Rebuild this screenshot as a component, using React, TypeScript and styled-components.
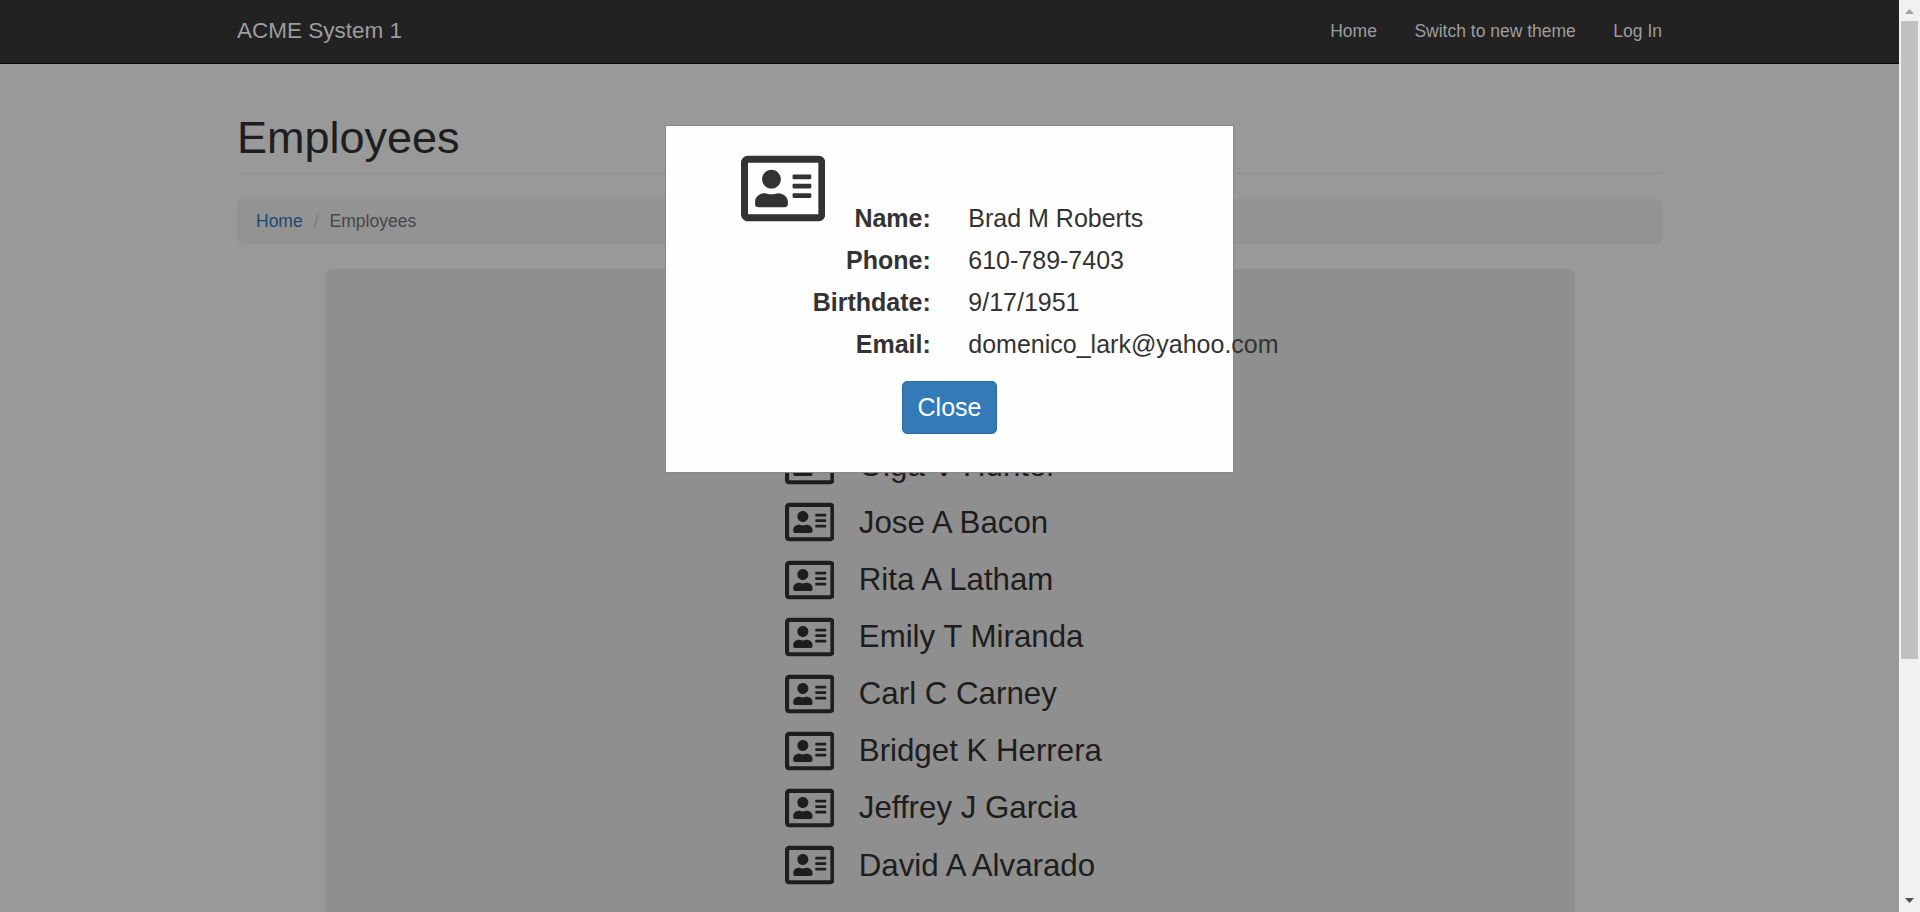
import React from "react";
import styled, { createGlobalStyle } from "styled-components";
import { FaRegAddressCard } from "react-icons/fa";

const GlobalStyle = createGlobalStyle`
  *, *::before, *::after { box-sizing: border-box; }
  html, body { margin: 0; padding: 0; }
  body {
    background: #fff;
    color: #333;
    font-family: Arial, "Liberation Sans", sans-serif;
    font-size: 17.5px;
    line-height: 25px;
    overflow: hidden;
  }
`;

const Window = styled.div`
  display: flex;
  height: 912px;
`;

const Viewport = styled.div`
  position: relative;
  flex: 1;
  display: flex;
  flex-direction: column;
  overflow: hidden;
`;

const Navbar = styled.nav`
  position: relative;
  z-index: 3;
  flex: none;
  height: 64px;
  background: #222;
  border-bottom: 1px solid #080808;
`;

const Container = styled.div`
  width: 1425px;
  margin: 0 auto;
`;

const NavRow = styled(Container)`
  display: flex;
  align-items: center;
  justify-content: space-between;
  height: 62px;
`;

const Brand = styled.a`
  padding-bottom: 2px;
  color: #9d9d9d;
  font-size: 22.5px;
`;

const NavLinks = styled.div`
  display: flex;
  gap: 37.5px;
`;

const NavLink = styled.a`
  color: #9d9d9d;
`;

const Page = styled(Container)`
  display: flex;
  flex-direction: column;
  flex: 1;
  min-height: 0;
`;

const PageHeader = styled.header`
  margin: 49px 0 25px;
  padding-bottom: 11px;
  border-bottom: 1px solid #eee;
`;

const Title = styled.h1`
  margin: 0;
  font-size: 45px;
  font-weight: 400;
  line-height: 49px;
`;

const Breadcrumb = styled.div`
  display: flex;
  flex: none;
  height: 45px;
  margin-bottom: 25px;
  padding: 10px 19px;
  background: #f5f5f5;
  border-radius: 5px;
`;

const CrumbLink = styled.a`
  color: #337ab7;
`;

const CrumbSeparator = styled.span`
  padding: 0 11px;
  color: #ccc;
`;

const Crumb = styled.span`
  color: #777;
`;

const Panel = styled.section`
  align-self: center;
  flex: 1;
  width: 1250px;
  padding: 167.8px 0 0 460px;
  background: #eee;
  border-radius: 7px 7px 0 0;
`;

const EmployeeRow = styled.div`
  display: flex;
  align-items: center;
  gap: 24.8px;
  height: 57.1px;
  font-size: 31.25px;
`;

const CardIcon = styled(FaRegAddressCard)<{ $size: number }>`
  flex: none;
  width: ${({ $size }) => $size * 1.125}px;
  height: ${({ $size }) => $size}px;
`;

const Backdrop = styled.div`
  position: absolute;
  inset: 0;
  z-index: 2;
  display: flex;
  justify-content: center;
  align-items: flex-start;
  padding-top: 125px;
  background: rgba(0, 0, 0, 0.4);
`;

const Dialog = styled.div`
  display: flex;
  flex-direction: column;
  align-items: center;
  width: 569px;
  height: 348px;
  padding-top: 25px;
  background: #fefefe;
  border: 1px solid #888;
  font-size: 25px;
`;

const DetailRow = styled.div<{ $tall?: boolean }>`
  display: flex;
  align-items: flex-end;
  align-self: stretch;
  gap: 37.5px;
  height: ${({ $tall }) => ($tall ? 88 : 42)}px;
  line-height: 42px;
  white-space: nowrap;
`;

const LabelCell = styled.div`
  display: flex;
  flex: none;
  align-items: flex-start;
  justify-content: flex-end;
  gap: 29px;
  width: 264.8px;
`;

const Label = styled.span<{ $dropped?: boolean }>`
  font-weight: 700;
  padding-top: ${({ $dropped }) => ($dropped ? 46 : 0)}px;
`;

const CloseButton = styled.button`
  margin-top: 16px;
  width: 95px;
  height: 53px;
  padding: 0;
  color: #fff;
  background: #337ab7;
  border: 1px solid #2e6da4;
  border-radius: 5px;
  font: inherit;
`;

const ScrollTrack = styled.div`
  display: flex;
  flex-direction: column;
  align-items: center;
  justify-content: space-between;
  width: 21px;
  padding: 9px 0;
  background: #f1f1f1;
`;

const ScrollThumb = styled.div`
  width: 17px;
  height: 638px;
  margin: 7px 0 auto;
  background: #c1c1c1;
`;

const Arrow = styled.svg`
  display: block;
  flex: none;
  width: 9px;
  height: 5px;
`;

const employees = [
  "Olga V Hunter",
  "Jose A Bacon",
  "Rita A Latham",
  "Emily T Miranda",
  "Carl C Carney",
  "Bridget K Herrera",
  "Jeffrey J Garcia",
  "David A Alvarado",
];

const details = [
  { label: "Name:", value: "Brad M Roberts" },
  { label: "Phone:", value: "610-789-7403" },
  { label: "Birthdate:", value: "9/17/1951" },
  { label: "Email:", value: "domenico_lark@yahoo.com" },
];

export default function App() {
  return (
    <Window>
      <GlobalStyle />
      <Viewport>
        <Navbar>
          <NavRow>
            <Brand>ACME System 1</Brand>
            <NavLinks>
              <NavLink>Home</NavLink>
              <NavLink>Switch to new theme</NavLink>
              <NavLink>Log In</NavLink>
            </NavLinks>
          </NavRow>
        </Navbar>
        <Page as="main">
          <PageHeader>
            <Title>Employees</Title>
          </PageHeader>
          <Breadcrumb>
            <CrumbLink>Home</CrumbLink>
            <CrumbSeparator>/</CrumbSeparator>
            <Crumb>Employees</Crumb>
          </Breadcrumb>
          <Panel>
            {employees.map((name) => (
              <EmployeeRow key={name}>
                <CardIcon $size={44} />
                <span>{name}</span>
              </EmployeeRow>
            ))}
          </Panel>
        </Page>
        <Backdrop>
          <Dialog role="dialog">
            {details.map(({ label, value }, index) => (
              <DetailRow key={label} $tall={index === 0}>
                <LabelCell>
                  {index === 0 && <CardIcon $size={75} />}
                  <Label $dropped={index === 0}>{label}</Label>
                </LabelCell>
                <span>{value}</span>
              </DetailRow>
            ))}
            <CloseButton>Close</CloseButton>
          </Dialog>
        </Backdrop>
      </Viewport>
      <ScrollTrack>
        <Arrow viewBox="0 0 9 5">
          <path d="M4.5 0 9 5H0Z" fill="#a3a3a3" />
        </Arrow>
        <ScrollThumb />
        <Arrow viewBox="0 0 9 5">
          <path d="M0 0H9L4.5 5Z" fill="#505050" />
        </Arrow>
      </ScrollTrack>
    </Window>
  );
}
